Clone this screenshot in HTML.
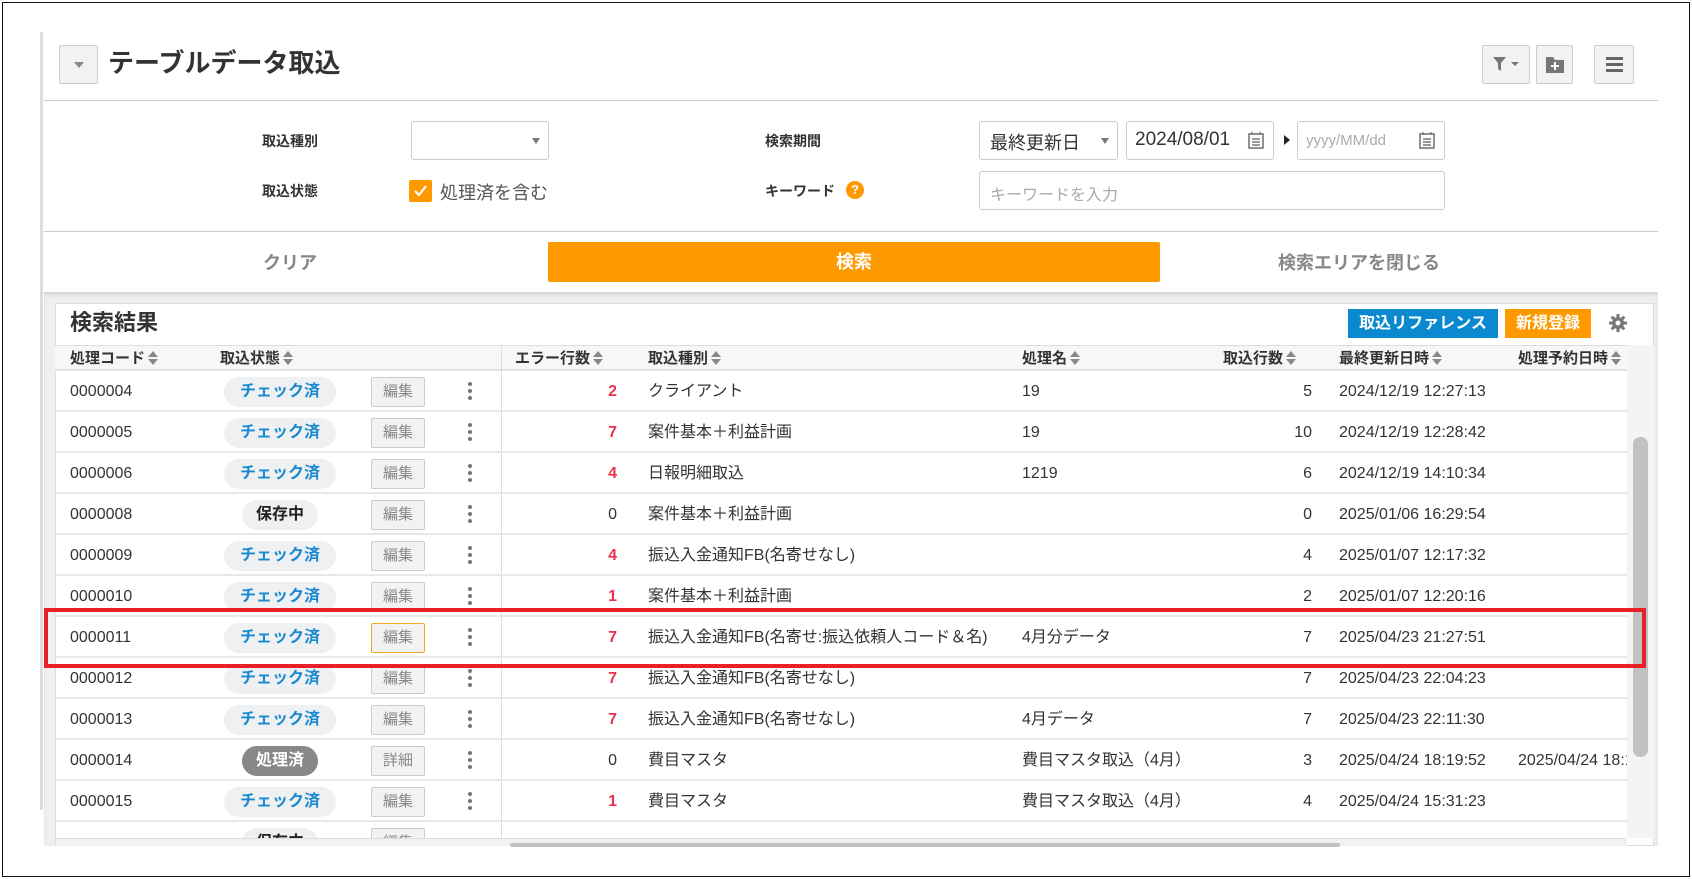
<!DOCTYPE html>
<html><head><meta charset="utf-8">
<style>
*{box-sizing:border-box;margin:0;padding:0}
body{width:1692px;height:879px;background:#fff;font-family:"Liberation Sans","Noto Sans CJK JP",sans-serif;color:#333;position:relative;overflow:hidden}
.a{position:absolute}
.frame{left:2px;top:2px;width:1688px;height:875px;border:1px solid #111}
.btn{background:#f2f2f2;border:1px solid #ccc;border-radius:2px}
.lbl{font-size:14px;font-weight:bold;color:#333}
.inp{background:#fff;border:1px solid #ccc;border-radius:3px}
.row{position:absolute;left:0;width:1572px;height:41px;border-bottom:2px solid #e8e8e8;font-size:16px;color:#333}
.row>div{position:absolute;top:0;line-height:41px;white-space:nowrap}
.pill{top:6px!important;height:30px;line-height:30px!important;border-radius:15px;background:#eef0f2;text-align:center;font-weight:bold;font-size:16px;color:#1a8ad0}
.ed{top:6px!important;left:316px;width:54px;height:30px;line-height:28px!important;background:#f2f2f2;border:1px solid #ccc;border-radius:2px;text-align:center;color:#888;font-size:15px}
.keb{left:413px;width:4px}
.keb i{display:block;width:4px;height:4px;border-radius:2px;background:#777;margin:3px 0}
.err{left:505px;width:57px;text-align:right;font-weight:bold;color:#e8334a}
.e0{font-weight:normal;color:#333}
.th{position:absolute;top:0;line-height:25px;font-size:15px;font-weight:bold;color:#333;white-space:nowrap}
.th s{display:inline-block;width:10px;height:14px;margin-left:3px;vertical-align:-2px;position:relative}
.th s:before,.th s:after{content:"";position:absolute;left:0;border-left:5px solid transparent;border-right:5px solid transparent}
.th s:before{top:0;border-bottom:6px solid #888}
.th s:after{top:8px;border-top:6px solid #888}
</style></head><body>
<div class="a frame"></div>
<div class="a" style="left:40px;top:32px;width:3px;height:778px;background:#ddd"></div>

<div class="a btn" style="left:59px;top:45px;width:39px;height:39px"></div>
<div class="a" style="left:74px;top:62px;border-left:5px solid transparent;border-right:5px solid transparent;border-top:6px solid #888"></div>
<div class="a" style="left:108px;top:48px;font-size:26px;font-weight:bold;color:#333;line-height:30px">テーブルデータ取込</div>
<div class="a btn" style="left:1482px;top:45px;width:48px;height:39px"></div>
<svg class="a" style="left:1492px;top:56px" width="30" height="16"><path d="M1 1h13l-5 6v8l-3-2V7z" fill="#777"/><path d="M19 6h8l-4 4z" fill="#777"/></svg>
<div class="a btn" style="left:1536px;top:45px;width:37px;height:39px"></div>
<svg class="a" style="left:1545px;top:55px" width="20" height="20"><path d="M1 2h7l2 3h9v13H1z" fill="#777"/><path d="M10 7v8M6 11h8" stroke="#fff" stroke-width="2"/></svg>
<div class="a btn" style="left:1594px;top:45px;width:40px;height:39px"></div>
<div class="a" style="left:1606px;top:57px;width:17px;height:3px;background:#666;box-shadow:0 6px 0 #666,0 12px 0 #666"></div>
<div class="a" style="left:44px;top:100px;width:1614px;height:1px;background:#ccc"></div>

<div class="a lbl" style="left:262px;top:131px">取込種別</div>
<div class="a lbl" style="left:262px;top:181px">取込状態</div>
<div class="a inp" style="left:411px;top:121px;width:138px;height:39px"></div>
<div class="a" style="left:532px;top:138px;border-left:4px solid transparent;border-right:4px solid transparent;border-top:6px solid #777"></div>
<div class="a" style="left:409px;top:180px;width:23px;height:22px;background:#f90;border-radius:2px"></div>
<svg class="a" style="left:412px;top:183px" width="17" height="16"><path d="M3 8l4 4 7-9" stroke="#fff" stroke-width="2.2" fill="none"/></svg>
<div class="a" style="left:440px;top:179px;font-size:18px;color:#555">処理済を含む</div>
<div class="a lbl" style="left:765px;top:131px">検索期間</div>
<div class="a lbl" style="left:765px;top:181px">キーワード</div>
<div class="a" style="left:846px;top:181px;width:18px;height:18px;border-radius:9px;background:#f90;color:#fff;font-size:13px;font-weight:bold;text-align:center;line-height:18px">?</div>
<div class="a inp" style="left:979px;top:121px;width:139px;height:39px"></div>
<div class="a" style="left:990px;top:129px;font-size:18px;color:#333">最終更新日</div>
<div class="a" style="left:1101px;top:138px;border-left:4px solid transparent;border-right:4px solid transparent;border-top:6px solid #777"></div>
<div class="a inp" style="left:1126px;top:121px;width:148px;height:39px"></div>
<div class="a" style="left:1135px;top:129px;font-size:19px;color:#333">2024/08/01</div>
<svg class="a" style="left:1248px;top:131px" width="16" height="18"><rect x="1" y="3" width="14" height="14" fill="none" stroke="#777" stroke-width="1.6"/><path d="M4 1v3M12 1v3M4 8h8M4 11h8M4 14h8" stroke="#777" stroke-width="1.4"/></svg>
<div class="a" style="left:1284px;top:135px;border-top:5px solid transparent;border-bottom:5px solid transparent;border-left:6px solid #222"></div>
<div class="a inp" style="left:1297px;top:121px;width:148px;height:39px"></div>
<div class="a" style="left:1306px;top:132px;font-size:15px;color:#aaa">yyyy/MM/dd</div>
<svg class="a" style="left:1419px;top:131px" width="16" height="18"><rect x="1" y="3" width="14" height="14" fill="none" stroke="#777" stroke-width="1.6"/><path d="M4 1v3M12 1v3M4 8h8M4 11h8M4 14h8" stroke="#777" stroke-width="1.4"/></svg>
<div class="a inp" style="left:979px;top:171px;width:466px;height:39px"></div>
<div class="a" style="left:990px;top:181px;font-size:16px;color:#aaa">キーワードを入力</div>
<div class="a" style="left:44px;top:231px;width:1614px;height:1px;background:#ccc"></div>
<div class="a" style="left:263px;top:249px;font-size:18px;font-weight:bold;color:#888">クリア</div>
<div class="a" style="left:548px;top:242px;width:612px;height:40px;background:#f90;border-radius:2px;color:#fff;font-size:18px;font-weight:bold;text-align:center;line-height:40px">検索</div>
<div class="a" style="left:1278px;top:249px;font-size:18px;font-weight:bold;color:#888">検索エリアを閉じる</div>

<div class="a" style="left:44px;top:292px;width:1614px;height:554px;background:#efefef;box-shadow:inset 0 4px 4px -2px #ccc"></div>
<div class="a" style="left:55px;top:303px;width:1599px;height:543px;background:#fff;border:1px solid #ddd"></div>
<div class="a" style="left:70px;top:309px;font-size:22px;font-weight:bold;color:#333;line-height:28px">検索結果</div>
<div class="a" style="left:1348px;top:309px;width:150px;height:29px;background:#0a88d0;color:#fff;font-weight:bold;font-size:16px;text-align:center;line-height:29px">取込リファレンス</div>
<div class="a" style="left:1505px;top:309px;width:86px;height:29px;background:#f90;color:#fff;font-weight:bold;font-size:16px;text-align:center;line-height:29px">新規登録</div>
<svg class="a" style="left:1609px;top:314px" width="18" height="18" viewBox="0 0 18 18"><g fill="#777"><circle cx="9" cy="9" r="6"/><rect x="7.5" y="0" width="3" height="18"/><rect x="0" y="7.5" width="18" height="3"/><rect x="7.5" y="0" width="3" height="18" transform="rotate(45 9 9)"/><rect x="7.5" y="0" width="3" height="18" transform="rotate(-45 9 9)"/></g><circle cx="9" cy="9" r="2.5" fill="#fff"/></svg>

<div class="a" style="left:55px;top:345px;width:1572px;height:493px;overflow:hidden">
 <div class="a" style="left:0;top:0;width:1572px;height:26px;background:#f7f7f7;border-top:1px solid #ddd;border-bottom:2px solid #e2e2e2">
  <div class="th" style="left:15px">処理コード<s></s></div>
  <div class="th" style="left:165px">取込状態<s></s></div>
  <div class="th" style="left:460px">エラー行数<s></s></div>
  <div class="th" style="left:593px">取込種別<s></s></div>
  <div class="th" style="left:967px">処理名<s></s></div>
  <div class="th" style="left:1168px">取込行数<s></s></div>
  <div class="th" style="left:1284px">最終更新日時<s></s></div>
  <div class="th" style="left:1463px">処理予約日時<s></s></div>
 </div>
 <div class="a" style="left:446px;top:0;width:1px;height:493px;background:#ddd"></div>
 <div class="a" style="left:0;top:26px;width:1572px;height:470px">
  <div class="row" style="top:0"><div style="left:15px">0000004</div><div class="pill" style="left:169px;width:112px">チェック済</div><div class="ed">編集</div><div class="keb" style="top:8px"><i></i><i></i><i></i></div><div class="err">2</div><div style="left:593px">クライアント</div><div style="left:967px">19</div><div style="left:1200px;width:57px;text-align:right">5</div><div style="left:1284px">2024/12/19 12:27:13</div></div>
  <div class="row" style="top:41px"><div style="left:15px">0000005</div><div class="pill" style="left:169px;width:112px">チェック済</div><div class="ed">編集</div><div class="keb" style="top:8px"><i></i><i></i><i></i></div><div class="err">7</div><div style="left:593px">案件基本＋利益計画</div><div style="left:967px">19</div><div style="left:1200px;width:57px;text-align:right">10</div><div style="left:1284px">2024/12/19 12:28:42</div></div>
  <div class="row" style="top:82px"><div style="left:15px">0000006</div><div class="pill" style="left:169px;width:112px">チェック済</div><div class="ed">編集</div><div class="keb" style="top:8px"><i></i><i></i><i></i></div><div class="err">4</div><div style="left:593px">日報明細取込</div><div style="left:967px">1219</div><div style="left:1200px;width:57px;text-align:right">6</div><div style="left:1284px">2024/12/19 14:10:34</div></div>
  <div class="row" style="top:123px"><div style="left:15px">0000008</div><div class="pill" style="left:187px;width:76px;color:#222">保存中</div><div class="ed">編集</div><div class="keb" style="top:8px"><i></i><i></i><i></i></div><div class="err e0">0</div><div style="left:593px">案件基本＋利益計画</div><div style="left:1200px;width:57px;text-align:right">0</div><div style="left:1284px">2025/01/06 16:29:54</div></div>
  <div class="row" style="top:164px"><div style="left:15px">0000009</div><div class="pill" style="left:169px;width:112px">チェック済</div><div class="ed">編集</div><div class="keb" style="top:8px"><i></i><i></i><i></i></div><div class="err">4</div><div style="left:593px">振込入金通知FB(名寄せなし)</div><div style="left:1200px;width:57px;text-align:right">4</div><div style="left:1284px">2025/01/07 12:17:32</div></div>
  <div class="row" style="top:205px"><div style="left:15px">0000010</div><div class="pill" style="left:169px;width:112px">チェック済</div><div class="ed">編集</div><div class="keb" style="top:8px"><i></i><i></i><i></i></div><div class="err">1</div><div style="left:593px">案件基本＋利益計画</div><div style="left:1200px;width:57px;text-align:right">2</div><div style="left:1284px">2025/01/07 12:20:16</div></div>
  <div class="row" style="top:246px"><div style="left:15px">0000011</div><div class="pill" style="left:169px;width:112px">チェック済</div><div class="ed" style="border-color:#f5a623">編集</div><div class="keb" style="top:8px"><i></i><i></i><i></i></div><div class="err">7</div><div style="left:593px">振込入金通知FB(名寄せ:振込依頼人コード＆名)</div><div style="left:967px">4月分データ</div><div style="left:1200px;width:57px;text-align:right">7</div><div style="left:1284px">2025/04/23 21:27:51</div></div>
  <div class="row" style="top:287px"><div style="left:15px">0000012</div><div class="pill" style="left:169px;width:112px">チェック済</div><div class="ed">編集</div><div class="keb" style="top:8px"><i></i><i></i><i></i></div><div class="err">7</div><div style="left:593px">振込入金通知FB(名寄せなし)</div><div style="left:1200px;width:57px;text-align:right">7</div><div style="left:1284px">2025/04/23 22:04:23</div></div>
  <div class="row" style="top:328px"><div style="left:15px">0000013</div><div class="pill" style="left:169px;width:112px">チェック済</div><div class="ed">編集</div><div class="keb" style="top:8px"><i></i><i></i><i></i></div><div class="err">7</div><div style="left:593px">振込入金通知FB(名寄せなし)</div><div style="left:967px">4月データ</div><div style="left:1200px;width:57px;text-align:right">7</div><div style="left:1284px">2025/04/23 22:11:30</div></div>
  <div class="row" style="top:369px"><div style="left:15px">0000014</div><div class="pill" style="left:187px;width:76px;background:#888;color:#fff">処理済</div><div class="ed">詳細</div><div class="keb" style="top:8px"><i></i><i></i><i></i></div><div class="err e0">0</div><div style="left:593px">費目マスタ</div><div style="left:967px">費目マスタ取込（4月）</div><div style="left:1200px;width:57px;text-align:right">3</div><div style="left:1284px">2025/04/24 18:19:52</div><div style="left:1463px">2025/04/24 18:19</div></div>
  <div class="row" style="top:410px"><div style="left:15px">0000015</div><div class="pill" style="left:169px;width:112px">チェック済</div><div class="ed">編集</div><div class="keb" style="top:8px"><i></i><i></i><i></i></div><div class="err">1</div><div style="left:593px">費目マスタ</div><div style="left:967px">費目マスタ取込（4月）</div><div style="left:1200px;width:57px;text-align:right">4</div><div style="left:1284px">2025/04/24 15:31:23</div></div>
  <div class="row" style="top:451px"><div class="pill" style="left:187px;width:76px;color:#222">保存中</div><div class="ed">編集</div></div>
 </div>
</div>
<div class="a" style="left:1627px;top:345px;width:27px;height:493px;background:#f4f4f4"></div>
<div class="a" style="left:1633px;top:437px;width:15px;height:320px;background:#c1c1c1;border-radius:7px"></div>
<div class="a" style="left:56px;top:838px;width:1571px;height:8px;background:#f1f1f1;border-top:1px solid #ddd"></div>
<div class="a" style="left:510px;top:843px;width:830px;height:4px;background:#c1c1c1;border-radius:2px"></div>

<div class="a" style="left:44px;top:608px;width:1602px;height:60px;border:4px solid #e8202a"></div>
</body></html>
